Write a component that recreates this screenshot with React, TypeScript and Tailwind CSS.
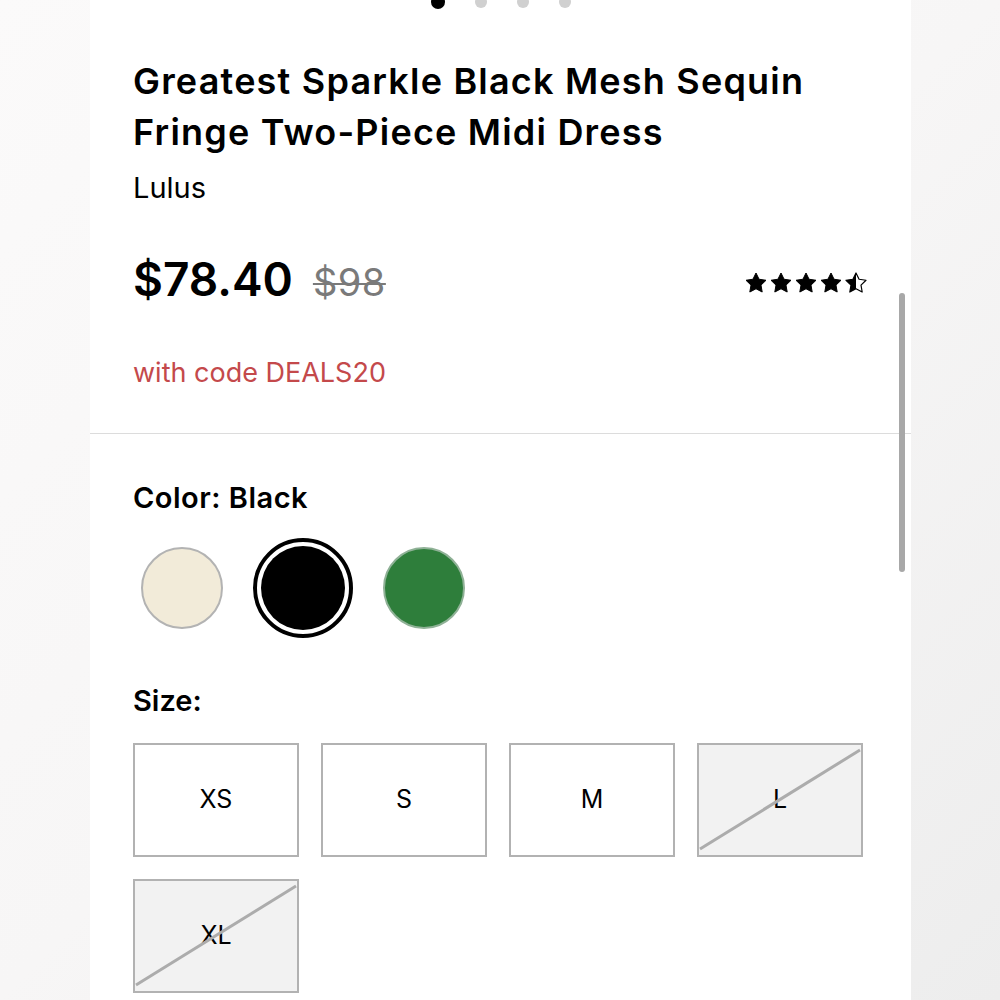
const STAR = "M12 2l3.09 6.26L22 9.27l-5 4.87 1.18 6.88L12 17.77l-6.18 3.25L7 14.14 2 9.27l6.91-1.01L12 2z"

function Star({ kind }: { kind: "full" | "half" }) {
  return (
    <svg viewBox="0 0 24 24" className="w-[24px] h-[24px]">
      <defs>
        <linearGradient id="half-fill" x1="0" x2="1" y1="0" y2="0">
          <stop offset="50%" stopColor="#000" />
          <stop offset="50%" stopColor="#fff" />
        </linearGradient>
      </defs>
      <path
        d={STAR}
        fill={kind === "full" ? "#000" : "url(#half-fill)"}
        stroke="#000"
        strokeWidth={kind === "full" ? 1 : 1.2}
        strokeLinejoin="round"
      />
    </svg>
  )
}

function SizeBox({ label, soldOut }: { label: string; soldOut?: boolean }) {
  return (
    <div
      className={`relative h-[114px] border-2 border-[#b2b2b2] flex items-center justify-center text-[25px] ${
        soldOut ? "bg-[#f2f2f2]" : "bg-white"
      }`}
    >
      <span className="relative z-10">{label}</span>
      {soldOut && (
        <svg className="absolute inset-0 w-full h-full z-20" viewBox="0 0 162 110" preserveAspectRatio="none">
          <line x1="1" y1="104" x2="161" y2="5" stroke="#acacac" strokeWidth="3" />
        </svg>
      )}
    </div>
  )
}

export default function App() {
  return (
    <div className="min-h-screen w-full flex bg-gradient-to-br from-[#fbfafa] via-[#f7f6f6] to-[#ededed] font-['Inter',sans-serif] text-black">
      <div className="relative ml-[90px] w-[821px] h-[1000px] bg-white overflow-hidden">
        {/* carousel dots */}
        <div className="flex justify-center items-center gap-[30px] -mt-[5px] h-[14px]">
          <span className="w-[14px] h-[14px] rounded-full bg-black" />
          <span className="w-3 h-3 rounded-full bg-[#d0d0d0]" />
          <span className="w-3 h-3 rounded-full bg-[#d0d0d0]" />
          <span className="w-3 h-3 rounded-full bg-[#d0d0d0]" />
        </div>

        <div className="px-[43px]">
          <h1 className="mt-[47px] text-[36px] leading-[51px] font-semibold tracking-[1.2px]">
            Greatest Sparkle Black Mesh Sequin
            <br />
            Fringe Two-Piece Midi Dress
          </h1>
          <p className="mt-[13px] text-[29px] leading-[34px]">Lulus</p>

          <div className="mt-[51px] flex items-center justify-between h-[48px]">
            <div className="flex items-baseline gap-[20px]">
              <span className="text-[46px] leading-[48px] font-semibold">$78.40</span>
              <span className="text-[38px] leading-[48px] tracking-[0.5px] text-[#7a7a7a] line-through decoration-[2px]">$98</span>
            </div>
            <div className="flex items-center gap-px mt-[6px]">
              <Star kind="full" />
              <Star kind="full" />
              <Star kind="full" />
              <Star kind="full" />
              <Star kind="half" />
            </div>
          </div>

          <p className="mt-[53px] text-[27px] leading-[32px] text-[#c4494b]">with code DEALS20</p>
        </div>

        <div className="mt-[44px] h-px bg-[#dcdcdc]" />

        <div className="px-[43px]">
          <p className="mt-[47px] text-[29px] leading-[34px] font-semibold tracking-[0.5px]">Color: Black</p>

          <div className="mt-[23px] flex items-center gap-[30px] pl-[8px]">
            <span className="w-[82px] h-[82px] rounded-full bg-[#f2ebd9] border-2 border-[#b3b3b3]" />
            <span className="w-[100px] h-[100px] rounded-full border-[4px] border-black p-[4px]">
              <span className="block w-full h-full rounded-full bg-black" />
            </span>
            <span className="w-[82px] h-[82px] rounded-full bg-[#2e7e3b] border-2 border-[#8fb196]" />
          </div>

          <p className="mt-[46px] text-[29px] leading-[34px] font-semibold">Size:</p>

          <div className="mt-[25px] grid grid-cols-[repeat(4,166px)] gap-x-[22px] gap-y-[22px]">
            <SizeBox label="XS" />
            <SizeBox label="S" />
            <SizeBox label="M" />
            <SizeBox label="L" soldOut />
            <SizeBox label="XL" soldOut />
          </div>
        </div>

        {/* scroll indicator */}
        <div className="absolute left-[809px] top-[293px] w-[6px] h-[279px] rounded-full bg-[#a8a8a8]" />
      </div>
    </div>
  )
}
